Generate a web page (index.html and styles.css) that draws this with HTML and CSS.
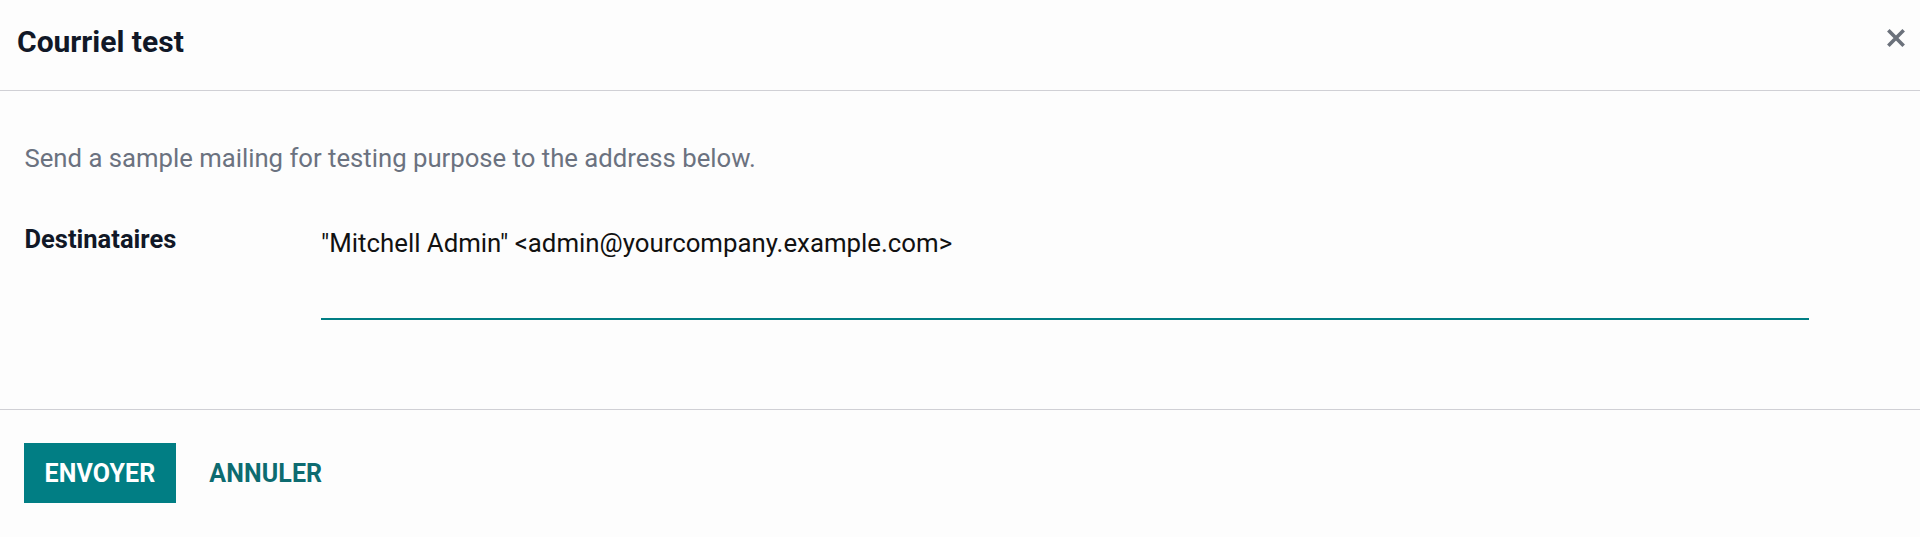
FILE: index.html
```html
<!DOCTYPE html>
<html lang="fr">
<head>
<meta charset="utf-8">
<title>Courriel test</title>
<link rel="stylesheet" href="styles.css">
</head>
<body>
<div class="modal">
  <header class="modal-header">
    <h4 class="modal-title">Courriel test</h4>
    <button class="btn-close" type="button" aria-label="Close">
      <svg viewBox="0 0 18 18" width="18" height="18" aria-hidden="true">
        <path d="M2.6 2.6 L15.4 15.4 M15.4 2.6 L2.6 15.4" stroke="currentColor" stroke-width="3.6" stroke-linecap="square" fill="none"/>
      </svg>
    </button>
  </header>
  <main class="modal-body">
    <p class="intro">Send a sample mailing for testing purpose to the address below.</p>
    <div class="field-row">
      <label class="field-label">Destinataires</label>
      <div class="field-input">"Mitchell Admin" &lt;admin@yourcompany.example.com&gt;</div>
    </div>
  </main>
  <footer class="modal-footer">
    <button class="btn btn-primary" type="button">ENVOYER</button>
    <button class="btn btn-secondary" type="button">ANNULER</button>
  </footer>
</div>
</body>
</html>
```
FILE: styles.css
```css
html, body {
  margin: 0;
  padding: 0;
  background: #fdfdfd;
}
body {
  font-family: Roboto, "Liberation Sans", sans-serif;
  color: #212529;
  width: 1920px;
  height: 537px;
  overflow: hidden;
}
.modal {
  display: flex;
  flex-direction: column;
  height: 537px;
}
.modal-header {
  display: flex;
  justify-content: space-between;
  align-items: flex-start;
  height: 91px;
  box-sizing: border-box;
  padding: 24px 15px 0 17px;
  border-bottom: 1px solid #d0d0d5;
}
.modal-title {
  margin: 0;
  font-size: 30px;
  line-height: 36px;
  font-weight: 700;
  color: #111827;
}
.btn-close {
  margin-top: 5px;
  padding: 0;
  border: 0;
  background: none;
  color: #6b717b;
  width: 18px;
  height: 18px;
  display: flex;
}
.modal-body {
  padding: 48px 111px 89px 24.5px;
}
.intro {
  margin: 0;
  font-size: 25.7px;
  line-height: 38.25px;
  color: #6b7280;
}
.field-row {
  display: grid;
  grid-template-columns: 296.5px 1fr;
  margin-top: 45.75px;
  align-items: start;
}
.field-label {
  font-size: 25.5px;
  line-height: 33.25px;
  font-weight: 700;
  color: #111827;
}
.field-input {
  font-size: 25.8px;
  line-height: 38.25px;
  color: #111;
  height: 97px;
  box-sizing: border-box;
  padding-top: 1px;
  border-bottom: 2px solid #017e84;
}
.modal-footer {
  flex: 1;
  display: flex;
  align-items: flex-start;
  gap: 13px;
  padding: 33px 24px 0 24px;
  border-top: 1px solid #d0d0d5;
}
.btn {
  height: 60px;
  padding: 0 19.5px;
  border: 1px solid transparent;
  font-family: Roboto, "Liberation Sans", sans-serif;
  font-size: 25px;
  font-weight: 700;
  letter-spacing: 0.1px;
  cursor: pointer;
}
.btn-primary {
  background: #017e84;
  border-color: #017e84;
  color: #fff;
}
.btn-secondary {
  background: transparent;
  color: #0d6b70;
}
```
